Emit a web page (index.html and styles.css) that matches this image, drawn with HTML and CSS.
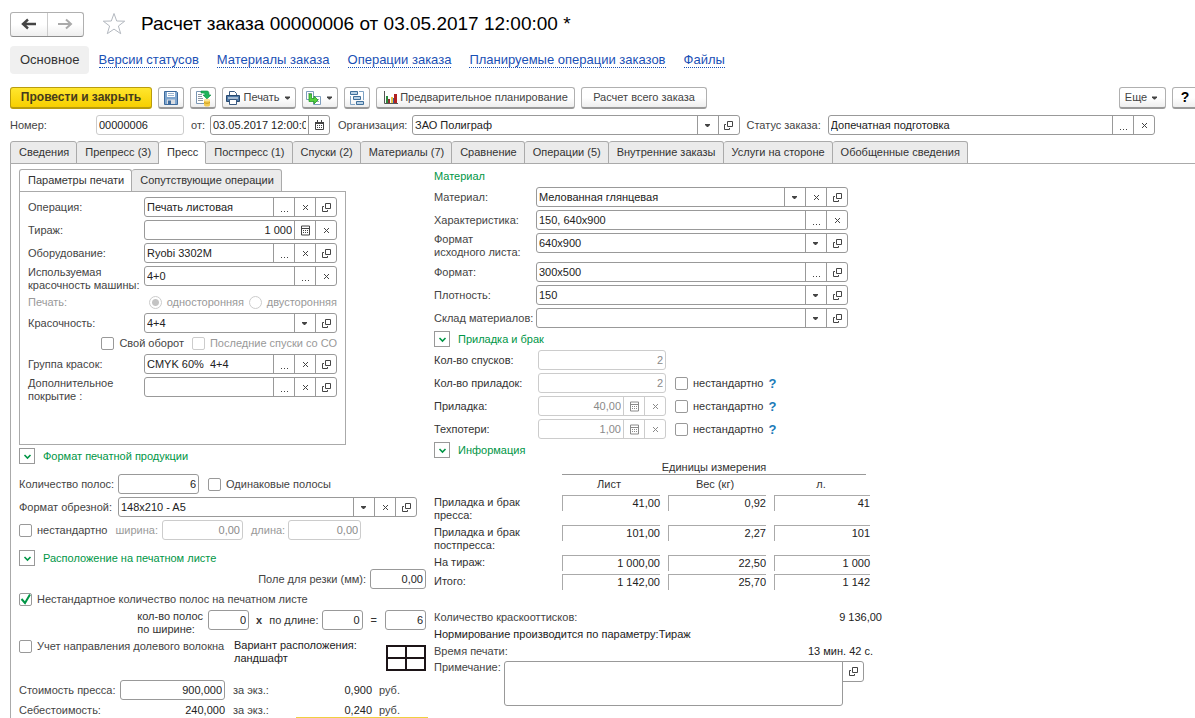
FILE: index.html
```
<!DOCTYPE html>
<html lang="ru">
<head>
<meta charset="utf-8">
<title>Расчет заказа 00000006</title>
<link rel="stylesheet" href="styles.css">
</head>
<body>
<svg class="sprite" aria-hidden="true">
  <symbol id="open" viewBox="0 0 11 11"><path d="M4.500 1.500h5v5h-5zM3 4.500H1.500v5h5V8" fill="none" stroke="currentColor"/></symbol>
  <symbol id="clear" viewBox="0 0 11 11"><path d="M3 3l5 5M8 3L3 8" fill="none" stroke="currentColor"/></symbol>
  <symbol id="dots" viewBox="0 0 11 11"><path d="M2 9h1v1H2zM5 9h1v1H5zM8 9h1v1H8z" fill="currentColor"/></symbol>
  <symbol id="calc" viewBox="0 0 11 11"><path d="M1.500 1h8v9h-8zM1.500 3.500h8" fill="none" stroke="currentColor"/><path d="M3 5h1v1H3zM5 5h1v1H5zM7 5h1v1H7zM3 7h1v1H3zM5 7h1v1H5zM7 7h1v1H7z" fill="currentColor"/></symbol>
  <symbol id="cal" viewBox="0 0 11 11"><path d="M1.500 2.500h8v7h-8zM3.500 0v2M7.500 0v2" fill="none" stroke="currentColor"/><path d="M1 2h9v2H1zM3 5h1v1H3zM5 5h1v1H5zM7 5h1v1H7zM3 7h1v1H3zM5 7h1v1H5zM7 7h1v1H7z" fill="currentColor"/></symbol>
  <symbol id="down" viewBox="0 0 11 11"><path d="M3 4.500h5v1L6 7.500H5L3 5.500z" fill="currentColor"/></symbol>
  <symbol id="chev" viewBox="0 0 11 11"><path d="M2.500 4l3 3 3-3" fill="none" stroke="currentColor" stroke-width="1.600"/></symbol>
</svg>

<header class="head">
  <div class="history">
    <button aria-label="Назад"><svg width="16" height="12" viewBox="0 0 16 12"><path d="M2 6h13M7 1.500L2 6l5 4.500" fill="none" stroke="#444" stroke-width="2.400"/></svg></button>
    <button class="next" aria-label="Вперед"><svg width="16" height="12" viewBox="0 0 16 12"><path d="M1 6h13M9 1.500L14 6l-5 4.500" fill="none" stroke="#aaa" stroke-width="2"/></svg></button>
  </div>
  <svg class="star" width="24" height="24" viewBox="0 0 24 24"><path d="M12 1.500l2.700 7.500 8 .2-6.300 4.800 2.300 7.700-6.700-4.600-6.700 4.600 2.300-7.700L1.300 9.200l8-.2z" fill="none" stroke="#b3b8bf"/></svg>
  <h1>Расчет заказа 00000006 от 03.05.2017 12:00:00 *</h1>
</header>

<nav class="nav">
  <span class="current">Основное</span>
  <a href="#v">Версии статусов</a>
  <a href="#m">Материалы заказа</a>
  <a href="#o">Операции заказа</a>
  <a href="#p">Планируемые операции заказов</a>
  <a href="#f">Файлы</a>
</nav>

<div class="toolbar">
  <button class="btn primary">Провести и закрыть</button>
  <button class="btn icon" aria-label="Записать"><svg width="16" height="16" viewBox="0 0 16 16"><path d="M1.500 1.500h12l1 1v12h-13z" fill="#7fa6cf" stroke="#3d6a9c"/><path d="M4 2h8v5H4z" fill="#fff"/><path d="M5 3.500h6M5 5.500h6" stroke="#9bb4cf"/><path d="M4 9.500h8V14H4z" fill="#d9dde2"/><path d="M5 10.500h3V14H5z" fill="#3d6a9c"/></svg></button>
  <button class="btn icon" aria-label="Провести"><svg width="18" height="18" viewBox="0 0 18 18"><path d="M2.500 2.500h10v12h-10z" fill="#fff" stroke="#7a96b4"/><path d="M4 5.500h4M4 7.500h4M4 9.500h5M4 11.500h5" stroke="#8d97a3"/><path d="M7 2h6c2 0 2 2 2 4h2l-4 4-4-4h2c0-2-1-2-4-2z" fill="#1fb45a" stroke="#0d8f42" stroke-width=".6"/><path d="M10 11v5c0 2 6 2 6 0v-5z" fill="#f3cc52"/><ellipse cx="13" cy="11" rx="3" ry="1.300" fill="#fbe69a"/><path d="M10 13.500c1 1 5 1 6 0" fill="none" stroke="#c99a1b"/></svg></button>
  <button class="btn print"><svg width="16" height="14" viewBox="0 0 16 14"><path d="M4.500 5V.5h5l2 2V5" fill="#fff" stroke="#3b5a80"/><path d="M1.500 4.500h13v6h-13z" fill="#4f7aa8" stroke="#294a70"/><path d="M3 7h10" stroke="#fff"/><path d="M4.500 8.500h7v5h-7z" fill="#fff" stroke="#3b5a80"/></svg>Печать<svg class="ico"><use href="#down"/></svg></button>
  <button class="btn based" aria-label="Создать на основании"><svg width="17" height="15" viewBox="0 0 17 15"><path d="M1.500 1.500h7v8h-7zM8.500 6.500h7v8h-7z" fill="#fff" stroke="#7d9dbd"/><path d="M3 3.500h4M11 9.500h3M11 11.500h3" stroke="#9ab"/><path d="M4 4h2.500v4.500H9V6l4 4-4 4v-2.500H4z" fill="#55cf3e" stroke="#239a28" stroke-width=".8"/></svg><svg class="ico"><use href="#down"/></svg></button>
  <button class="btn icon" aria-label="Структура"><svg width="16" height="16" viewBox="0 0 16 16"><path d="M1.500 1.500h7v3h-7zM4.500 6.500h7v3h-7zM7.500 11.500h7v3h-7z" fill="#b9d2e6" stroke="#3f6f9b"/><path d="M10 1.500h4.500V10M1.500 6v8.500H6" fill="none" stroke="#7fa3c4"/></svg></button>
  <button class="btn plan"><svg width="15" height="14" viewBox="0 0 15 14"><path d="M1.500 0v12.500H15" fill="none" stroke="#555"/><path d="M3 5h2v7H3z" fill="#2b8a3c"/><path d="M5 8h2v4H5z" fill="#8c2f2f"/><path d="M8 6h2v6H8z" fill="#e7c44a"/><path d="M10 7h1v5h-1z" fill="#355f9a"/><path d="M11 3h3v9h-3z" fill="#b02020"/></svg>Предварительное планирование</button>
  <button class="btn calc">Расчет всего заказа</button>
  <span class="spacer"></span>
  <button class="btn more">Еще<svg class="ico"><use href="#down"/></svg></button>
  <button class="btn icon help">?</button>
</div>

<div class="doc">
  <label class="l-num" for="num">Номер:</label>
  <div class="fld soft w-num"><input id="num" value="00000006"></div>
  <label class="l-date" for="date">от:</label>
  <div class="fld w-date"><input id="date" value="03.05.2017 12:00:00"><button aria-label="Календарь"><svg class="ico"><use href="#cal"/></svg></button></div>
  <label class="l-org" for="org">Организация:</label>
  <div class="fld grow"><select id="org"><option>ЗАО Полиграф</option></select><button aria-label="Открыть"><svg class="ico"><use href="#open"/></svg></button></div>
  <label class="l-status" for="status">Статус заказа:</label>
  <div class="fld grow"><input id="status" value="Допечатная подготовка"><button aria-label="Выбрать"><svg class="ico"><use href="#dots"/></svg></button><button aria-label="Очистить"><svg class="ico"><use href="#clear"/></svg></button></div>
</div>

<div class="tabs main-tabs" role="tablist">
  <button role="tab">Сведения</button><button role="tab">Препресс (3)</button><button role="tab" class="on" aria-selected="true">Пресс</button><button role="tab">Постпресс (1)</button><button role="tab">Спуски (2)</button><button role="tab">Материалы (7)</button><button role="tab">Сравнение</button><button role="tab">Операции (5)</button><button role="tab">Внутренние заказы</button><button role="tab">Услуги на стороне</button><button role="tab">Обобщенные сведения</button>
</div>

<main class="page">
  <section class="left">
    <div class="tabs" role="tablist"><button role="tab" class="on" aria-selected="true">Параметры печати</button><button role="tab">Сопутствующие операции</button></div>
    <div class="params">
      <div class="row"><label for="op">Операция:</label><div class="fld"><input id="op" value="Печать листовая"><button aria-label="Выбрать"><svg class="ico"><use href="#dots"/></svg></button><button aria-label="Очистить"><svg class="ico"><use href="#clear"/></svg></button><button aria-label="Открыть"><svg class="ico"><use href="#open"/></svg></button></div></div>
      <div class="row"><label for="run">Тираж:</label><div class="fld num"><input id="run" value="1 000"><button aria-label="Калькулятор"><svg class="ico"><use href="#calc"/></svg></button><button aria-label="Очистить"><svg class="ico"><use href="#clear"/></svg></button></div></div>
      <div class="row"><label for="eq">Оборудование:</label><div class="fld"><input id="eq" value="Ryobi 3302M"><button aria-label="Выбрать"><svg class="ico"><use href="#dots"/></svg></button><button aria-label="Очистить"><svg class="ico"><use href="#clear"/></svg></button><button aria-label="Открыть"><svg class="ico"><use href="#open"/></svg></button></div></div>
      <div class="row two"><label for="used">Используемая<br>красочность машины:</label><div class="fld"><input id="used" value="4+0"><button aria-label="Выбрать"><svg class="ico"><use href="#dots"/></svg></button><button aria-label="Очистить"><svg class="ico"><use href="#clear"/></svg></button></div></div>
      <div class="row thin off"><span class="cap">Печать:</span><label class="opt"><input type="radio" name="side" checked disabled>односторонняя</label><label class="opt"><input type="radio" name="side" disabled>двусторонняя</label></div>
      <div class="row"><label for="col">Красочность:</label><div class="fld"><select id="col"><option>4+4</option></select><button aria-label="Открыть"><svg class="ico"><use href="#open"/></svg></button></div></div>
      <div class="row thin end"><label class="opt"><input type="checkbox">Свой оборот</label><label class="opt off"><input type="checkbox" disabled>Последние спуски со СО</label></div>
      <div class="row"><label for="grp">Группа красок:</label><div class="fld"><input id="grp" value="CMYK 60%  4+4"><button aria-label="Выбрать"><svg class="ico"><use href="#dots"/></svg></button><button aria-label="Очистить"><svg class="ico"><use href="#clear"/></svg></button><button aria-label="Открыть"><svg class="ico"><use href="#open"/></svg></button></div></div>
      <div class="row two"><label for="add">Дополнительное<br>покрытие :</label><div class="fld"><input id="add"><button aria-label="Выбрать"><svg class="ico"><use href="#dots"/></svg></button><button aria-label="Очистить"><svg class="ico"><use href="#clear"/></svg></button><button aria-label="Открыть"><svg class="ico"><use href="#open"/></svg></button></div></div>
    </div>

    <h2><button class="toggle" aria-label="Свернуть"><svg class="ico"><use href="#chev"/></svg></button>Формат печатной продукции</h2>
    <div class="group">
      <div class="row"><label class="l-cnt" for="cnt">Количество полос:</label><div class="fld num w81"><input id="cnt" value="6"></div><label class="opt same"><input type="checkbox">Одинаковые полосы</label></div>
      <div class="row"><label class="l-cnt" for="cut">Формат обрезной:</label><div class="fld w299"><select id="cut"><option>148x210 - A5</option></select><button aria-label="Очистить"><svg class="ico"><use href="#clear"/></svg></button><button aria-label="Открыть"><svg class="ico"><use href="#open"/></svg></button></div></div>
      <div class="row gap8"><label class="opt"><input type="checkbox">нестандартно</label><label class="off l-w" for="w">ширина:</label><div class="fld num soft dim w81"><input id="w" value="0,00" disabled></div><label class="off l-len" for="len">длина:</label><div class="fld num soft dim w73"><input id="len" value="0,00" disabled></div></div>
    </div>
    <h2><button class="toggle" aria-label="Свернуть"><svg class="ico"><use href="#chev"/></svg></button>Расположение на печатном листе</h2>
    <div class="row right-edge"><label for="cutm">Поле для резки (мм):</label><div class="fld num w56"><input id="cutm" value="0,00"></div></div>
    <div class="row thin"><label class="opt"><input type="checkbox" checked>Нестандартное количество полос на печатном листе</label></div>
    <div class="row two right-edge counts"><label class="l-cw" for="cw">кол-во полос<br>по ширине:</label><div class="fld num w41"><input id="cw" value="0"></div><b>x</b><label class="l-cl" for="cl">по длине:</label><div class="fld num w41"><input id="cl" value="0"></div><span class="eq">=</span><div class="fld num w41"><input aria-label="Всего полос" value="6"></div></div>
    <div class="row fiber"><label class="opt"><input type="checkbox">Учет направления долевого волокна</label><p>Вариант расположения:<br>ландшафт</p><svg width="40" height="26" viewBox="0 0 40 26"><path d="M1 1h38v24H1zM20 1v24M1 13h38" fill="#fff" stroke="#1c1417" stroke-width="2"/></svg></div>
    <div class="row cost"><label for="cost">Стоимость пресса:</label><div class="fld num"><input id="cost" value="900,000"></div><span>за экз.:</span><span class="val">0,900</span><span>руб.</span></div>
    <div class="row cost thin"><span>Себестоимость:</span><span class="val">240,000</span><span>за экз.:</span><span class="val">0,240</span><span>руб.</span></div>
    <div class="mark"></div>
  </section>

  <section class="right">
    <h2 class="plain">Материал</h2>
    <div class="mat">
      <div class="row"><label for="mt">Материал:</label><div class="fld"><select id="mt"><option>Мелованная глянцевая</option></select><button aria-label="Очистить"><svg class="ico"><use href="#clear"/></svg></button><button aria-label="Открыть"><svg class="ico"><use href="#open"/></svg></button></div></div>
      <div class="row"><label for="ch">Характеристика:</label><div class="fld"><input id="ch" value="150, 640x900"><button aria-label="Выбрать"><svg class="ico"><use href="#dots"/></svg></button><button aria-label="Очистить"><svg class="ico"><use href="#clear"/></svg></button></div></div>
      <div class="row two"><label for="src">Формат<br>исходного листа:</label><div class="fld"><select id="src"><option>640x900</option></select><button aria-label="Открыть"><svg class="ico"><use href="#open"/></svg></button></div></div>
      <div class="row"><label for="fmt">Формат:</label><div class="fld"><input id="fmt" value="300x500"><button aria-label="Выбрать"><svg class="ico"><use href="#dots"/></svg></button><button aria-label="Открыть"><svg class="ico"><use href="#open"/></svg></button></div></div>
      <div class="row"><label for="den">Плотность:</label><div class="fld"><select id="den"><option>150</option></select><button aria-label="Открыть"><svg class="ico"><use href="#open"/></svg></button></div></div>
      <div class="row"><label for="st">Склад материалов:</label><div class="fld"><select id="st"><option></option></select><button aria-label="Открыть"><svg class="ico"><use href="#open"/></svg></button></div></div>
    </div>
    <h2><button class="toggle" aria-label="Свернуть"><svg class="ico"><use href="#chev"/></svg></button>Приладка и брак</h2>
    <div class="setup">
      <div class="row"><label for="s1">Кол-во спусков:</label><div class="fld num soft dim"><input id="s1" value="2" disabled></div></div>
      <div class="row"><label for="s2">Кол-во приладок:</label><div class="fld num soft dim"><input id="s2" value="2" disabled></div><label class="opt"><input type="checkbox">нестандартно</label><a href="#h1">?</a></div>
      <div class="row"><label for="s3">Приладка:</label><div class="fld num soft dim"><input id="s3" value="40,00" disabled><button disabled aria-label="Калькулятор"><svg class="ico"><use href="#calc"/></svg></button><button disabled aria-label="Очистить"><svg class="ico"><use href="#clear"/></svg></button></div><label class="opt"><input type="checkbox">нестандартно</label><a href="#h2">?</a></div>
      <div class="row"><label for="s4">Техпотери:</label><div class="fld num soft dim"><input id="s4" value="1,00" disabled><button disabled aria-label="Калькулятор"><svg class="ico"><use href="#calc"/></svg></button><button disabled aria-label="Очистить"><svg class="ico"><use href="#clear"/></svg></button></div><label class="opt"><input type="checkbox">нестандартно</label><a href="#h3">?</a></div>
    </div>
    <h2><button class="toggle" aria-label="Свернуть"><svg class="ico"><use href="#chev"/></svg></button>Информация</h2>
    <table class="info">
      <thead>
        <tr class="units"><td></td><th colspan="3"><span>Единицы измерения</span></th></tr>
        <tr class="names"><td></td><th>Лист</th><th>Вес (кг)</th><th>л.</th></tr>
      </thead>
      <tbody>
        <tr><th>Приладка и брак<br>пресса:</th><td><span>41,00</span></td><td><span>0,92</span></td><td><span>41</span></td></tr>
        <tr><th>Приладка и брак<br>постпресса:</th><td><span>101,00</span></td><td><span>2,27</span></td><td><span>101</span></td></tr>
        <tr class="one"><th>На тираж:</th><td><span>1 000,00</span></td><td><span>22,50</span></td><td><span>1 000</span></td></tr>
        <tr class="one"><th>Итого:</th><td><span>1 142,00</span></td><td><span>25,70</span></td><td><span>1 142</span></td></tr>
      </tbody>
    </table>
    <div class="totals">
      <p><span>Количество краскооттисков:</span><span class="dark">9 136,00</span></p>
      <p class="dark">Нормирование производится по параметру:Тираж</p>
      <p class="time"><span>Время печати:</span><span class="dark">13 мин. 42 с.</span></p>
    </div>
    <div class="note"><label for="note">Примечание:</label><textarea id="note"></textarea><button aria-label="Открыть"><svg class="ico"><use href="#open"/></svg></button></div>
  </section>
</main>
</body>
</html>
```
FILE: styles.css
```
* { box-sizing: border-box; }
body {
  margin: 0;
  padding: 11px 0 0 10px;
  background: #fff;
  color: #444;
  font: 11px/13px "Liberation Sans", Arial, sans-serif;
  overflow: hidden;
}
h1, h2, p { margin: 0; font-weight: normal; }
button, input, select, textarea { font: inherit; color: inherit; margin: 0; }
button { padding: 0; border: 0; background: none; }
label, span, h1, h2, p, button, th, a { white-space: nowrap; }
.sprite { position: absolute; width: 0; height: 0; }
.ico { width: 11px; height: 11px; flex: none; display: block; }

.head { display: flex; align-items: center; height: 26px; }
.history { display: flex; width: 74px; height: 25px; border: 1px solid #b0b0b0; border-bottom-color: #8c8c8c; border-radius: 3px; background: linear-gradient(#fff 50%, #eee); }
.history button { flex: 1; display: grid; place-items: center; }
.history .next { border-left: 1px solid #ccc; }
.star { margin: 0 15px 0 18px; }
h1 { font-size: 19px; line-height: 24px; color: #000; }

.nav { display: flex; align-items: center; gap: 18px; margin-top: 9px; height: 28px; font-size: 13px; line-height: 15px; color: #333; }
.nav .current { background: #f0f0f0; border-radius: 4px; padding: 6px 9px 7px 10px; margin-right: -8px; }
.nav a { color: #1a50b5; text-decoration: none; border-bottom: 1px dotted #1a50b5; line-height: 15px; }

.toolbar { display: flex; gap: 6px; margin-top: 13px; margin-right: -3px; }
.btn { display: flex; align-items: center; justify-content: center; height: 22px; border: 1px solid #b0b0b0; border-bottom: 2px solid #999; border-radius: 3px; background: linear-gradient(#fff 50%, #eee); color: #444; }
.primary { width: 142px; font-weight: bold; font-size: 12px; background: linear-gradient(#ffe62e, #f7cf00); border-color: #b99c0e; color: #453b1c; }
.btn.icon { width: 26px; }
.print { width: 74px; gap: 2px; }
.based { width: 36px; gap: 2px; }
.plan { width: 199px; gap: 2px; }
.calc { width: 126px; }
.more { width: 47px; gap: 2px; }
.btn.help { color: #000; font-size: 14px; font-weight: bold; }
.spacer { flex: 1; }

.doc { display: flex; align-items: center; margin: 6px 40px 6px 0; }
.l-num { width: 86px; }
.l-date { width: 26px; padding-left: 7px; }
.l-org { width: 82px; padding-left: 8px; }
.l-status { width: 88px; padding-left: 7px; }
.w-num { width: 88px; }
.w-date { width: 120px; }
.grow { flex: 1; }

.fld { display: flex; height: 20px; border: 1px solid #999; border-radius: 3px; background: #fff; color: #222; min-width: 0; }
.fld input, .fld select { flex: 1; width: 0; min-width: 0; height: 18px; border: 0; border-radius: 3px; padding: 0 2px; background: transparent; outline: none; white-space: pre; }
.fld select { appearance: none; background: url("data:image/svg+xml,%3Csvg xmlns='http://www.w3.org/2000/svg' width='21' height='18'%3E%3Cpath d='M.5 0v18' stroke='%23999'/%3E%3Cpath d='M8 8h5v1l-2 2h-1l-2-2z' fill='%23444'/%3E%3C/svg%3E") right center no-repeat; }
.fld button { width: 21px; border-left: 1px solid #999; display: grid; place-items: center; color: #444; }
.fld.num input { text-align: right; }
.fld.soft, .fld.soft button { border-color: #ccc; }
.fld.dim, .fld.dim button { color: #8a8a8a; }

.tabs { display: flex; height: 23px; margin-bottom: -1px; }
.tabs button { border: 1px solid #aaa; border-left-width: 0; border-radius: 3px 3px 0 0; background: #ebebeb; padding: 0 7px 0 8px; color: #333; }
.tabs button:first-child { border-left-width: 1px; }
.tabs .on { background: #fff; border-bottom-color: #fff; }

.page { display: grid; grid-template-columns: 409px minmax(0, 448px); gap: 6px; padding: 5px 0 0 8px; border: solid #aaa; border-width: 1px 0 0 1px; }
.left, .right { display: flex; flex-direction: column; gap: 3px; min-width: 0; }
.row { display: flex; align-items: center; min-height: 20px; }
.row.two { align-items: flex-start; }
.row.thin { min-height: 15px; height: 15px; }
.off { color: #999; }

.left > .tabs { margin-bottom: -4px; }
.params { display: flex; flex-direction: column; gap: 3px; width: 327px; border: 1px solid #aaa; padding: 5px 8px 41px; }
.params .row > label:first-child:not(.opt), .cap { width: 116px; flex: none; }
.params .fld { flex: 1; }
.params .thin { justify-content: space-between; }
.params .end { justify-content: flex-end; gap: 8px; }

.opt { display: flex; align-items: center; gap: 5px; }
.opt input { appearance: none; width: 13px; height: 13px; border: 1px solid #999; border-radius: 2px; background: #fff; display: grid; place-items: center; flex: none; }
.opt input:disabled { border-color: #ccc; }
.opt input[type=radio] { border-radius: 50%; }
.opt input[type=radio]:checked { background: radial-gradient(#c4c4c4 3px, #fff 4px); }
.opt input[type=checkbox]:checked { background: url("data:image/svg+xml,%3Csvg xmlns='http://www.w3.org/2000/svg' viewBox='0 0 11 11'%3E%3Cpath d='M1.500 5l3.500 4L10 .5' fill='none' stroke='%23009646' stroke-width='2'/%3E%3C/svg%3E"); }

h2 { display: flex; align-items: center; gap: 8px; height: 16px; font-size: 11px; color: #009646; }
h2.plain { height: 15px; }
.toggle { width: 16px; height: 16px; border: 1px solid #999; display: grid; place-items: center; color: #009646; }
.group { display: flex; flex-direction: column; gap: 3px; margin: 7px 0; }
.l-cnt { width: 99px; }
.w41 { width: 41px; }
.w56 { width: 56px; }
.w73 { width: 73px; }
.w81 { width: 81px; }
.w299 { width: 299px; }
.same { margin-left: 9px; }
.gap8 { gap: 8px; }
.l-w { margin-right: -4px; }
.l-len { margin-right: -5px; }
.right-edge { justify-content: flex-end; gap: 4px; padding-right: 2px; }
.counts { gap: 7px; color: #333; }
.l-cw { margin-right: -2px; }
.l-cl { margin-right: -4px; }
.counts > b, .counts > .eq, .l-cl { line-height: 20px; }
.counts > .eq { padding: 0 1px; }
.fiber { display: grid; grid-template-columns: 207px 1fr 40px; gap: 8px; padding-right: 2px; height: 32px; align-items: start; color: #222; }
.fiber .opt { color: #444; height: 15px; }
.fiber svg { align-self: end; }
.cost { display: grid; grid-template-columns: 101px 105px 1fr 80px 56px; align-items: center; color: #444; }
.cost > span:nth-child(3) { padding-left: 8px; }
.cost > span:last-child { padding-left: 7px; }
.val { text-align: right; color: #222; }
.fiber + .cost { margin-top: 6px; }
.mark { width: 132px; height: 1px; margin: -4px 0 0 auto; background: #f0d040; }

.mat { display: flex; flex-direction: column; gap: 3px; width: 414px; }
.mat label { width: 102px; }
.mat .fld { flex: 1; }
.setup { display: flex; flex-direction: column; gap: 3px; color: #333; }
.setup .row > label:first-child { width: 104px; }
.setup .fld { width: 128px; margin-right: 9px; }
.setup a { margin-left: 5px; color: #1a7ab8; font-size: 13px; font-weight: bold; text-decoration: none; }

.info { width: 446px; border-collapse: collapse; table-layout: fixed; color: #333; }
.info td, .info th { padding: 0; font-weight: normal; vertical-align: top; }
.info td:first-child, .info tbody th { width: 128px; text-align: left; }
.info .units th span { display: block; height: 14px; margin-right: 14px; border-bottom: 1px solid #999; }
.info .names th { height: 20px; padding: 3px 12px 0 0; }
.info tbody tr { height: 30px; }
.info tbody tr.one { height: 19px; }
.info tbody th { padding-top: 1px; }
.info tbody td { padding-right: 8px; }
.info tbody td:last-child { padding-right: 10px; }
.info tbody td span { display: block; height: 16px; border: solid #aaa; border-width: 1px 0 0 1px; text-align: right; line-height: 15px; color: #222; }

.totals { display: flex; flex-direction: column; gap: 4px; margin-top: 15px; }
.totals p { display: flex; justify-content: space-between; }
.totals .time { padding-right: 9px; }
.dark { color: #222; }
.note { display: flex; align-items: flex-start; width: 430px; }
.note label { width: 70px; }
.note textarea { flex: 1; min-width: 0; height: 45px; border: 1px solid #999; border-radius: 3px 0 3px 3px; resize: none; outline: none; }
.note button { width: 22px; height: 21px; margin-left: -1px; border: 1px solid #999; border-radius: 0 3px 3px 0; display: grid; place-items: center; }
```
